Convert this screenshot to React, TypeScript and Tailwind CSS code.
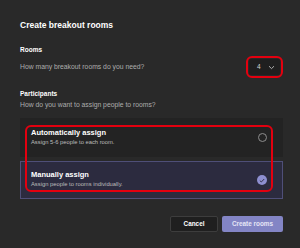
import React from "react";

const font = { fontFamily: '"Liberation Sans", Arial, sans-serif' };

const App = () => {
  return (
    <div
      className="w-[300px] h-[248px] bg-[#292929] pl-5 pr-[17px] pt-[19px] flex flex-col text-white overflow-hidden"
      style={font}
    >
      {/* Title */}
      <h1 className="text-[8.5px] leading-[12px] font-bold">Create breakout rooms</h1>

      {/* Rooms */}
      <div className="mt-[14px] text-[6.5px] leading-[10px] font-bold">Rooms</div>
      <div className="mt-px flex items-center justify-between h-[22px]">
        <span className="text-[6.8px] leading-[10px] text-[#adadad]">How many breakout rooms do you need?</span>
        <div className="w-[37px] h-[22px] border-2 border-[#e3000f] rounded-[6px] p-px">
          <div className="w-full h-full bg-[#1f1f1f] rounded-[2px] flex items-center justify-between pl-[8px] pr-[5px]">
            <span className="text-[6.5px] leading-none text-[#d6d6d6]">4</span>
            <svg width="7" height="5" viewBox="0 0 7 5" fill="none">
              <path d="M1 1.2 L3.5 3.6 L6 1.2" stroke="#bdbdbd" strokeWidth="0.9" />
            </svg>
          </div>
        </div>
      </div>

      {/* Participants */}
      <div className="mt-[11px] text-[6.5px] leading-[10px] font-bold">Participants</div>
      <div className="mt-px text-[6.8px] leading-[10px] text-[#adadad]">
        How do you want to assign people to rooms?
      </div>

      {/* Options */}
      <div className="relative mt-[8px] flex flex-col gap-[4px]">
        <div className="h-[39px] bg-[#232323] flex items-center justify-between pl-[11px] pr-[16px]">
          <div className="self-start pt-[10px]">
            <div className="text-[7.5px] leading-[10px] font-bold">Automatically assign</div>
            <div className="text-[5.8px] leading-[8px] text-[#bdbdbd]">Assign 5-6 people to each room.</div>
          </div>
          <div className="w-[9px] h-[9px] rounded-full border border-[#8d8d8d]" />
        </div>

        <div className="h-[38px] bg-[#2c2b3f] border border-[#4f4f78] flex items-center justify-between pl-[10px] pr-[15px]">
          <div className="self-start pt-[8px]">
            <div className="text-[7.5px] leading-[10px] font-bold">Manually assign</div>
            <div className="text-[5.8px] leading-[9px] text-[#bdbdbd]">Assign people to rooms individually.</div>
          </div>
          <div className="w-[10px] h-[10px] rounded-full bg-[#8e8fd0] flex items-center justify-center">
            <svg width="6" height="5" viewBox="0 0 6 5" fill="none">
              <path d="M0.8 2.6 L2.3 4 L5.2 1" stroke="#2c2b3f" strokeWidth="0.9" />
            </svg>
          </div>
        </div>

        {/* Annotation */}
        <div className="absolute left-[5px] top-[7px] w-[248px] h-[67px] border-2 border-[#e3000f] rounded-[6px] pointer-events-none" />
      </div>

      {/* Buttons */}
      <div className="mt-[17px] flex justify-end gap-[4px]">
        <button className="w-[48px] h-[16px] bg-[#1f1f1f] border border-[#3d3d3d] rounded-[2px] text-[6.4px] font-bold text-white">
          Cancel
        </button>
        <button className="w-[61px] h-[16px] bg-[#8385c5] rounded-[2px] text-[6.4px] font-bold text-[#e6e6f6]">
          Create rooms
        </button>
      </div>
    </div>
  );
};

export default App;
